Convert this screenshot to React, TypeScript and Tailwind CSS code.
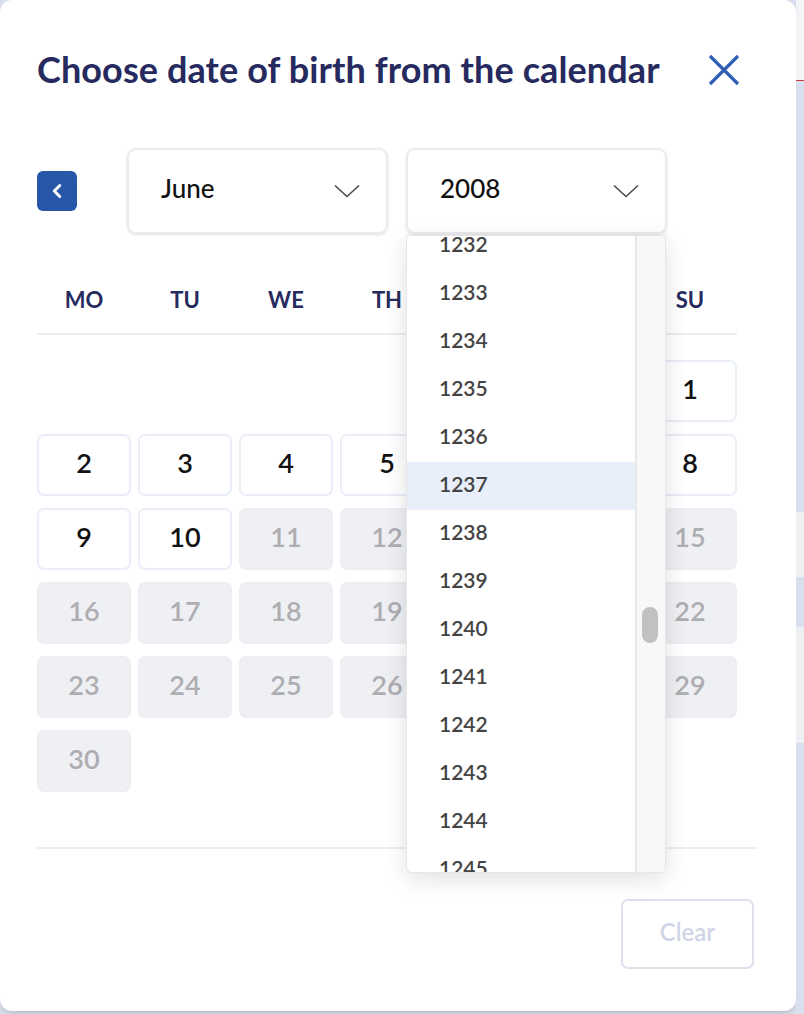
import { ChevronLeft } from "lucide-react";

const weekdays = ["MO", "TU", "WE", "TH", "FR", "SA", "SU"];
const years = Array.from({ length: 14 }, (_, i) => 1232 + i);

function Chevron() {
  return (
    <svg width="26" height="14" viewBox="0 0 26 14" fill="none">
      <path d="M1 1.5L13 12.5L25 1.5" stroke="#4b4b4b" strokeWidth="1.6" />
    </svg>
  );
}

function CloseIcon() {
  return (
    <svg width="32" height="32" viewBox="0 0 32 32" fill="none">
      <path d="M2 2L30 30M30 2L2 30" stroke="#2f5fb3" strokeWidth="3.2" />
    </svg>
  );
}

function DayCell({ day }: { day: number }) {
  const enabled = day <= 10;
  return (
    <div
      className={`h-[62px] rounded-[7px] border-2 flex items-center justify-center pb-[4px] text-[27px] font-semibold ${
        enabled
          ? "bg-white border-[#e9eef8] text-[#111]"
          : "bg-[#eff0f3] border-[#eceef3] text-[#aeaeb2]"
      }`}
    >
      {day}
    </div>
  );
}

export default function App() {
  const cells: (number | null)[] = [
    ...Array(6).fill(null),
    ...Array.from({ length: 30 }, (_, i) => i + 1),
  ];

  return (
    <div className="flex h-[1014px] w-[804px] bg-[#d9dfed] font-['Lato',sans-serif] overflow-hidden">
      {/* Modal */}
      <div className="w-[796px] h-[1011px] shrink-0 bg-white rounded-[12px] shadow-md pl-[37px] pr-[39px] pt-[50px]">
        {/* Header */}
        <div className="flex items-center justify-between h-[40px]">
          <h2 className="text-[36px] font-bold text-[#262a5e] tracking-[0.1px] pb-[2px]">
            Choose date of birth from the calendar
          </h2>
          <button className="mr-[17px]">
            <CloseIcon />
          </button>
        </div>

        {/* Month / Year selects */}
        <div className="flex items-center mt-[58px]">
          <button className="w-10 h-10 rounded-[6px] bg-[#2856a8] flex items-center justify-center">
            <ChevronLeft size={22} strokeWidth={3.2} color="white" />
          </button>
          <div className="ml-[50px] w-[261px] h-[86px] rounded-[9px] border-2 border-[#ebebed] shadow-sm flex items-center justify-between pl-[32px] pr-[26px]">
            <span className="text-[26px] font-medium text-[#111] pb-[6px]">June</span>
            <Chevron />
          </div>
          <div className="relative ml-[18px]">
            <div className="w-[261px] h-[86px] rounded-[9px] border-2 border-[#ebebed] shadow-sm flex items-center justify-between pl-[32px] pr-[26px]">
              <span className="text-[26px] font-medium text-[#111] pb-[6px]">2008</span>
              <Chevron />
            </div>
            {/* Year dropdown */}
            <div className="absolute left-0 top-[87px] z-10 w-[260px] h-[638px] bg-white rounded-b-[6px] border border-[#e6e6e8] shadow-[0_6px_24px_rgba(0,0,0,0.12)] flex overflow-hidden">
              <div className="flex-1 overflow-hidden">
                <div className="mt-[-14px]">
                  {years.map((y) => (
                    <div
                      key={y}
                      className={`h-12 flex items-center pl-[32px] pb-[5px] text-[21px] font-semibold text-[#444] ${
                        y === 1237 ? "bg-[#e8eefa]" : ""
                      }`}
                    >
                      {y}
                    </div>
                  ))}
                </div>
              </div>
              <div className="relative w-[30px] bg-[#f8f8f8] border-l-2 border-[#e8e8ea]">
                <div className="absolute left-[5px] top-[371px] w-[16px] h-[36px] rounded-full bg-[#c1c1c1]" />
              </div>
            </div>
          </div>
        </div>

        {/* Calendar */}
        <div className="w-[700px] mt-[32px]">
          <div className="grid grid-cols-7 gap-x-[7px] h-[69px] border-b-2 border-[#eceef2]">
            {weekdays.map((d) => (
              <div key={d} className="flex items-center justify-center text-[22px] font-bold text-[#262a5e]">
                {d}
              </div>
            ))}
          </div>
          <div className="grid grid-cols-7 gap-x-[7px] gap-y-3 mt-[25px]">
            {cells.map((d, i) => (d === null ? <div key={i} className="h-[62px]" /> : <DayCell key={i} day={d} />))}
          </div>
        </div>

        <div className="mt-[55px] h-[2px] w-[720px] bg-[#eceef2]" />

        <div className="flex justify-end w-[720px] mt-[50px]">
          <button className="mr-[3px] w-[133px] h-[70px] rounded-[7px] border-2 border-[#dde1ec] pb-[4px] text-[24px] font-semibold text-[#cfd5e6]">
            Clear
          </button>
        </div>
      </div>

      {/* Backdrop edge */}
      <div className="flex-1 flex flex-col">
        <div className="h-[80px] bg-[#f3f4f7]" />
        <div className="h-px bg-[#c23b3b]" />
        <div className="h-[431px] bg-[#d9dfed]" />
        <div className="h-[65px] bg-[#eef0f4]" />
        <div className="h-[50px] bg-[#d9dfed]" />
        <div className="h-[116px] bg-[#eef0f4]" />
        <div className="flex-1 bg-[#d9dfed]" />
      </div>
    </div>
  );
}
